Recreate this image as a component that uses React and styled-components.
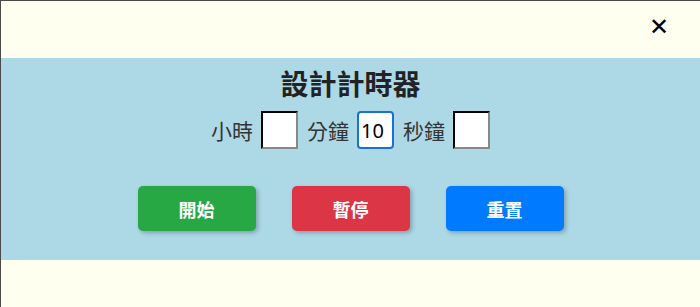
import React from "react";
import styled, { createGlobalStyle } from "styled-components";

const Global = createGlobalStyle`
  html, body { margin: 0; padding: 0; background: #fffff0; }
  body { font-family: "Noto Sans CJK TC", "Noto Sans", sans-serif; }
`;

const Page = styled.div`
  width: 700px;
  height: 307px;
  box-sizing: border-box;
  background: #fffff0;
  border-top: 1px solid #4a4a4a;
  border-left: 1px solid #4a4a4a;
  display: flex;
  flex-direction: column;
`;

const TopBar = styled.div`
  height: 57px;
  display: flex;
  align-items: center;
  justify-content: flex-end;
  padding-right: 31px;
`;

const CloseButton = styled.button`
  border: none;
  background: transparent;
  font-family: "DejaVu Sans", sans-serif;
  font-size: 24px;
  font-weight: bold;
  color: #000;
  padding: 0;
  line-height: 1;
  cursor: pointer;
  margin-top: -6px;
`;

const Panel = styled.section`
  background: #add8e6;
  padding: 8px 0 29px;
  display: flex;
  flex-direction: column;
  align-items: center;
`;

const Title = styled.h2`
  margin: 0;
  font-size: 28px;
  line-height: 34px;
  font-weight: bold;
  color: #222;
`;

const InputRow = styled.div`
  margin-top: 10px;
  display: flex;
  align-items: center;
  gap: 8px;
  height: 40px;
`;

const Label = styled.span`
  font-size: 21px;
  color: #333;
  margin-left: ${(p) => (p.first ? 0 : 1)}px;
`;

const TimeInput = styled.input`
  width: 37px;
  height: 38px;
  box-sizing: border-box;
  font-family: "Noto Sans", sans-serif;
  font-size: 20px;
  padding: 0 2px;
  color: #000;
  background: #fff;
  border: 2px inset #767676;
  border-top-color: #333;
  border-left-color: #333;
  border-bottom-color: #888;
  border-right-color: #888;
  border-radius: ${(p) => (p.focused ? "4px" : "0")};
  ${(p) =>
    p.focused &&
    `
    border: 2px solid #1a6fd8;
    outline: none;
  `}
`;

const ButtonRow = styled.div`
  margin-top: 36px;
  display: flex;
  gap: 36px;
`;

const ActionButton = styled.button`
  width: 118px;
  height: 45px;
  border: none;
  border-radius: 5px;
  background: ${(p) => p.color};
  color: #fff;
  font-family: "Noto Sans CJK TC", sans-serif;
  font-size: 18px;
  font-weight: bold;
  box-shadow: 2px 2px 4px rgba(0, 0, 0, 0.25);
  cursor: pointer;
`;

export default function App() {
  return (
    <>
      <Global />
      <Page>
        <TopBar>
          <CloseButton aria-label="close">✕</CloseButton>
        </TopBar>
        <Panel>
          <Title>設計計時器</Title>
          <InputRow>
            <Label first>小時</Label>
            <TimeInput type="text" defaultValue="" />
            <Label>分鐘</Label>
            <TimeInput type="text" defaultValue="10" focused />
            <Label>秒鐘</Label>
            <TimeInput type="text" defaultValue="" />
          </InputRow>
          <ButtonRow>
            <ActionButton color="#28a745">開始</ActionButton>
            <ActionButton color="#dc3545">暫停</ActionButton>
            <ActionButton color="#007bff">重置</ActionButton>
          </ButtonRow>
        </Panel>
      </Page>
    </>
  );
}
